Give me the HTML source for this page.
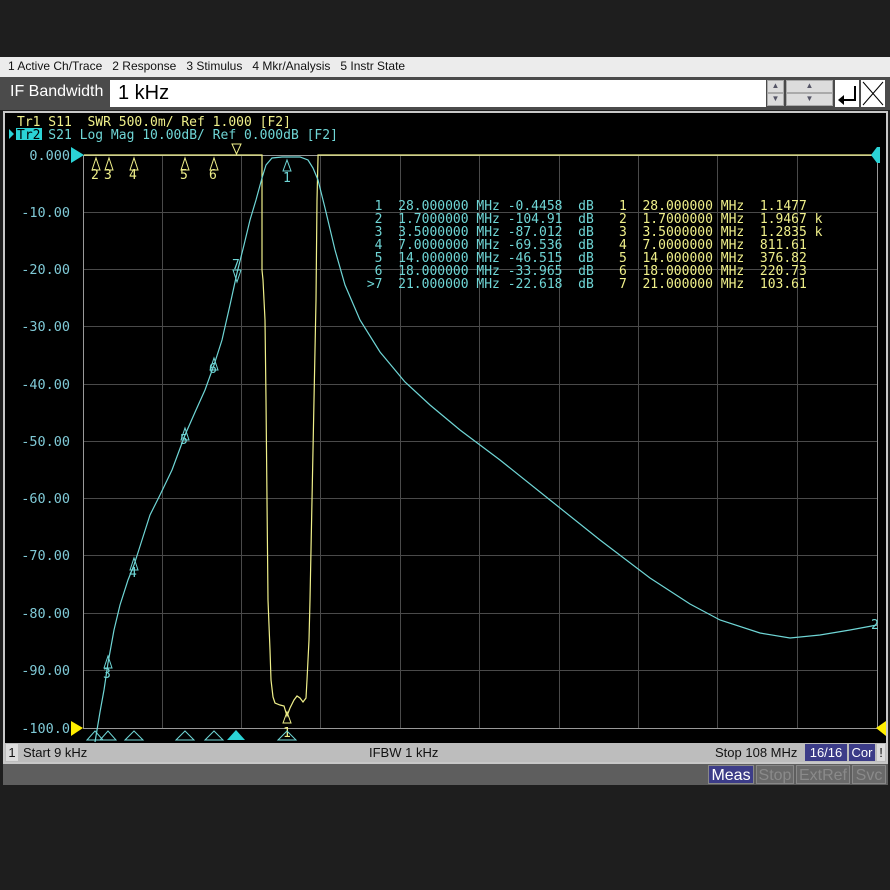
<!DOCTYPE html>
<html><head><meta charset="utf-8"><style>
body{margin:0;width:890px;height:890px;background:#1e1e1e;position:relative;overflow:hidden;font-family:"Liberation Sans",sans-serif}
.a{position:absolute}
.menu{left:0;top:57px;width:890px;height:20px;background:#ececec;font-size:12px;color:#111;line-height:18px}
.menu span{margin-left:8px;margin-right:2px}
.ifb{left:0;top:77px;width:890px;height:33px;background:#4b4b4b}
.btn{position:absolute;background:#dcdcdc;border:1px solid #aaa;box-sizing:border-box;font-size:8px;color:#556;text-align:center;line-height:9px}
.mono{font-family:"DejaVu Sans Mono","Liberation Mono",monospace}
text{white-space:pre}
.sk{position:absolute;top:765px;height:19px;font-family:"Liberation Sans",sans-serif;font-size:16px;line-height:19px;text-align:center;color:#8a8a8a;background:#6a6a6a;border:1px solid #888;box-sizing:border-box}
</style></head><body>
<div class="a menu"><span>1 Active Ch/Trace</span><span>2 Response</span><span>3 Stimulus</span><span>4 Mkr/Analysis</span><span>5 Instr State</span></div>
<div class="a ifb">
 <div class="a" style="left:10px;top:6px;font-size:16px;color:#fff">IF Bandwidth</div>
 <div class="a" style="left:110px;top:3px;width:656px;height:27px;background:#fff;font-size:20px;line-height:27px;color:#000"><span style="margin-left:8px">1 kHz</span></div>
 <div class="btn" style="left:767px;top:3px;width:17px;height:13px">▲</div>
 <div class="btn" style="left:767px;top:16px;width:17px;height:13px">▼</div>
 <div class="btn" style="left:786px;top:3px;width:47px;height:13px">▲</div>
 <div class="btn" style="left:786px;top:16px;width:47px;height:13px">▼</div>
 <div class="a" style="left:835px;top:3px;width:24px;height:27px;background:#fff"></div>
 <svg class="a" style="left:835px;top:3px" width="24" height="27"><path d="M20 6V20H8" stroke="#000" stroke-width="2" fill="none"/><path d="M3 20L9 15V25Z" fill="#000"/></svg>
 <div class="a" style="left:861px;top:3px;width:24px;height:27px;background:#fff"></div>
 <svg class="a" style="left:861px;top:3px" width="24" height="27"><path d="M2 2L22 25M22 2L2 25" stroke="#000" stroke-width="1"/></svg>
</div>
<div class="a" style="left:3px;top:111px;width:885px;height:653px;background:#c8c8c8"></div>
<div class="a" style="left:5px;top:113px;width:881px;height:630px;background:#000"></div>
<svg class="a" style="left:0;top:0" width="890" height="745">
<g stroke="#4a4a4a" stroke-width="1">
<line x1="162.5" y1="155" x2="162.5" y2="728"/><line x1="241.5" y1="155" x2="241.5" y2="728"/><line x1="320.5" y1="155" x2="320.5" y2="728"/><line x1="400.5" y1="155" x2="400.5" y2="728"/><line x1="479.5" y1="155" x2="479.5" y2="728"/><line x1="559.5" y1="155" x2="559.5" y2="728"/><line x1="638.5" y1="155" x2="638.5" y2="728"/><line x1="717.5" y1="155" x2="717.5" y2="728"/><line x1="797.5" y1="155" x2="797.5" y2="728"/>
<line x1="84" y1="212.5" x2="877" y2="212.5"/><line x1="84" y1="269.5" x2="877" y2="269.5"/><line x1="84" y1="326.5" x2="877" y2="326.5"/><line x1="84" y1="384.5" x2="877" y2="384.5"/><line x1="84" y1="441.5" x2="877" y2="441.5"/><line x1="84" y1="498.5" x2="877" y2="498.5"/><line x1="84" y1="555.5" x2="877" y2="555.5"/><line x1="84" y1="613.5" x2="877" y2="613.5"/><line x1="84" y1="670.5" x2="877" y2="670.5"/>
</g>
<rect x="83.5" y="155.5" width="794" height="573" fill="none" stroke="#999"/>
<g class="mono" font-size="13.5" fill="#7fc9d6" text-anchor="end">
<text x="70" y="160">0.000</text><text x="70" y="217">-10.00</text><text x="70" y="274">-20.00</text><text x="70" y="331">-30.00</text><text x="70" y="389">-40.00</text><text x="70" y="446">-50.00</text><text x="70" y="503">-60.00</text><text x="70" y="560">-70.00</text><text x="70" y="618">-80.00</text><text x="70" y="675">-90.00</text><text x="70" y="733">-100.0</text>
</g>
<polyline fill="none" stroke="#f0f08a" stroke-width="1.2" points="84,155 262,155 262,270 263,280 265,320 266,400 267,500 268,600 270,650 271,680 273,697 275,703 280,705 284,706 287,716 290,708 294,700 297,696 300,698 303,702 306,698 307,680 309,640 310,600 312,500 314,400 316,300 317,200 318,158 318,155 877,155"/>
<polyline fill="none" stroke="#6fd6d6" stroke-width="1.2" points="95,742 100,712 104,690 108,663 114,630 120,605 128,580 134,565 142,540 150,515 160,495 172,470 185,435 196,410 205,390 214,365 222,340 230,305 237,273 244,245 250,220 256,200 262,178 266,165 272,158 282,157 300,157 308,160 313,168 318,180 325,208 335,250 345,285 360,320 380,352 405,382 430,405 460,430 500,460 550,500 600,540 650,578 690,604 720,620 760,633 790,638 820,635 850,630 877,625"/>
<path d="M71,147L84,155L71,163Z" fill="#2bd3d6"/>
<path d="M877,147L880,147L880,163L877,163L871,155Z" fill="#2bd3d6"/>
<path d="M71,721L83,728L71,736Z" fill="#ffee00"/>
<path d="M886,721L876,728L886,736Z" fill="#ffee00"/>
<path d="M232,144L241,144L236.5,154Z" fill="none" stroke="#f0f08a"/>
<g fill="none" stroke="#f0f08a" stroke-width="1">
<path d="M92,170L96,158L100,170Z"/><path d="M105,170L109,158L113,170Z"/><path d="M130,170L134,158L138,170Z"/><path d="M181,170L185,158L189,170Z"/><path d="M210,170L214,158L218,170Z"/>
<path d="M283,723L287,712L291,723Z"/>
</g>
<g class="mono" font-size="13" fill="#f0f08a"><text x="91" y="179">2</text><text x="104" y="179">3</text><text x="129" y="179">4</text><text x="180" y="179">5</text><text x="209" y="179">6</text><text x="283" y="737">1</text></g>
<g fill="none" stroke="#6fd6d6" stroke-width="1">
<path d="M283,171L287,160L291,171Z"/><path d="M104,668L108,656L112,668Z"/><path d="M130,570L134,558L138,570Z"/><path d="M181,440L185,428L189,440Z"/><path d="M210,370L214,358L218,370Z"/><path d="M233,270L237,282L241,270Z"/>
<path d="M87,740L95,731L103,740Z"/><path d="M100,740L108,731L116,740Z"/><path d="M125,740L134,731L143,740Z"/><path d="M176,740L185,731L194,740Z"/><path d="M205,740L214,731L223,740Z"/><path d="M278,740L287,731L296,740Z"/>
</g>
<path d="M227,740L236,730L245,740Z" fill="#2bd3d6"/>
<g class="mono" font-size="13" fill="#6fd6d6"><text x="283" y="182">1</text><text x="103" y="678">3</text><text x="129" y="577">4</text><text x="180" y="444">5</text><text x="209" y="373">6</text><text x="232" y="269">7</text><text x="871" y="629">2</text></g>
<g class="mono" font-size="13" fill="#6fd6d6">
<text x="359" y="210">  1  28.000000 MHz -0.4458  dB</text>
<text x="359" y="223">  2  1.7000000 MHz -104.91  dB</text>
<text x="359" y="236">  3  3.5000000 MHz -87.012  dB</text>
<text x="359" y="249">  4  7.0000000 MHz -69.536  dB</text>
<text x="359" y="262">  5  14.000000 MHz -46.515  dB</text>
<text x="359" y="275">  6  18.000000 MHz -33.965  dB</text>
<text x="359" y="288"> &gt;7  21.000000 MHz -22.618  dB</text>
</g>
<g class="mono" font-size="13" fill="#f0f08a">
<text x="619" y="210">1  28.000000 MHz  1.1477</text>
<text x="619" y="223">2  1.7000000 MHz  1.9467 k</text>
<text x="619" y="236">3  3.5000000 MHz  1.2835 k</text>
<text x="619" y="249">4  7.0000000 MHz  811.61</text>
<text x="619" y="262">5  14.000000 MHz  376.82</text>
<text x="619" y="275">6  18.000000 MHz  220.73</text>
<text x="619" y="288">7  21.000000 MHz  103.61</text>
</g>
<g class="mono" font-size="13">
<text x="17" y="126" fill="#f0f08a">Tr1 S11  SWR 500.0m/ Ref 1.000 [F2]</text>
<rect x="16" y="128" width="26" height="12" fill="#2bd3d6"/>
<path d="M9,129L14,134L9,139Z" fill="#2bd3d6"/>
<text x="17" y="139" fill="#6fd6d6"><tspan fill="#000">Tr2</tspan> S21 Log Mag 10.00dB/ Ref 0.000dB [F2]</text>
</g>
</svg>
<div class="a" style="left:5px;top:743px;width:881px;height:19px;background:#bdbdbd;font-size:13px;color:#111;line-height:19px">
 <span class="a" style="left:1px;top:1px;width:12px;height:17px;background:#ddd;line-height:17px;text-align:center">1</span>
 <span class="a" style="left:18px">Start 9 kHz</span>
 <span class="a" style="left:364px">IFBW 1 kHz</span>
 <span class="a" style="left:710px">Stop 108 MHz</span>
 <span class="a" style="left:800px;top:1px;width:42px;height:17px;line-height:17px;background:#3c3c88;color:#fff;text-align:center">16/16</span>
 <span class="a" style="left:844px;top:1px;width:26px;height:17px;line-height:17px;background:#3c3c88;color:#fff;text-align:center">Cor</span>
 <span class="a" style="left:872px;top:1px;width:8px;height:17px;line-height:17px;background:#ddd;text-align:center">!</span>
</div>
<div class="a" style="left:3px;top:764px;width:885px;height:21px;background:#5e5e5e"></div>
<div class="sk" style="left:708px;width:46px;background:#3c3c88;color:#fff">Meas</div>
<div class="sk" style="left:756px;width:38px">Stop</div>
<div class="sk" style="left:796px;width:54px">ExtRef</div>
<div class="sk" style="left:852px;width:34px">Svc</div>
</body></html>
